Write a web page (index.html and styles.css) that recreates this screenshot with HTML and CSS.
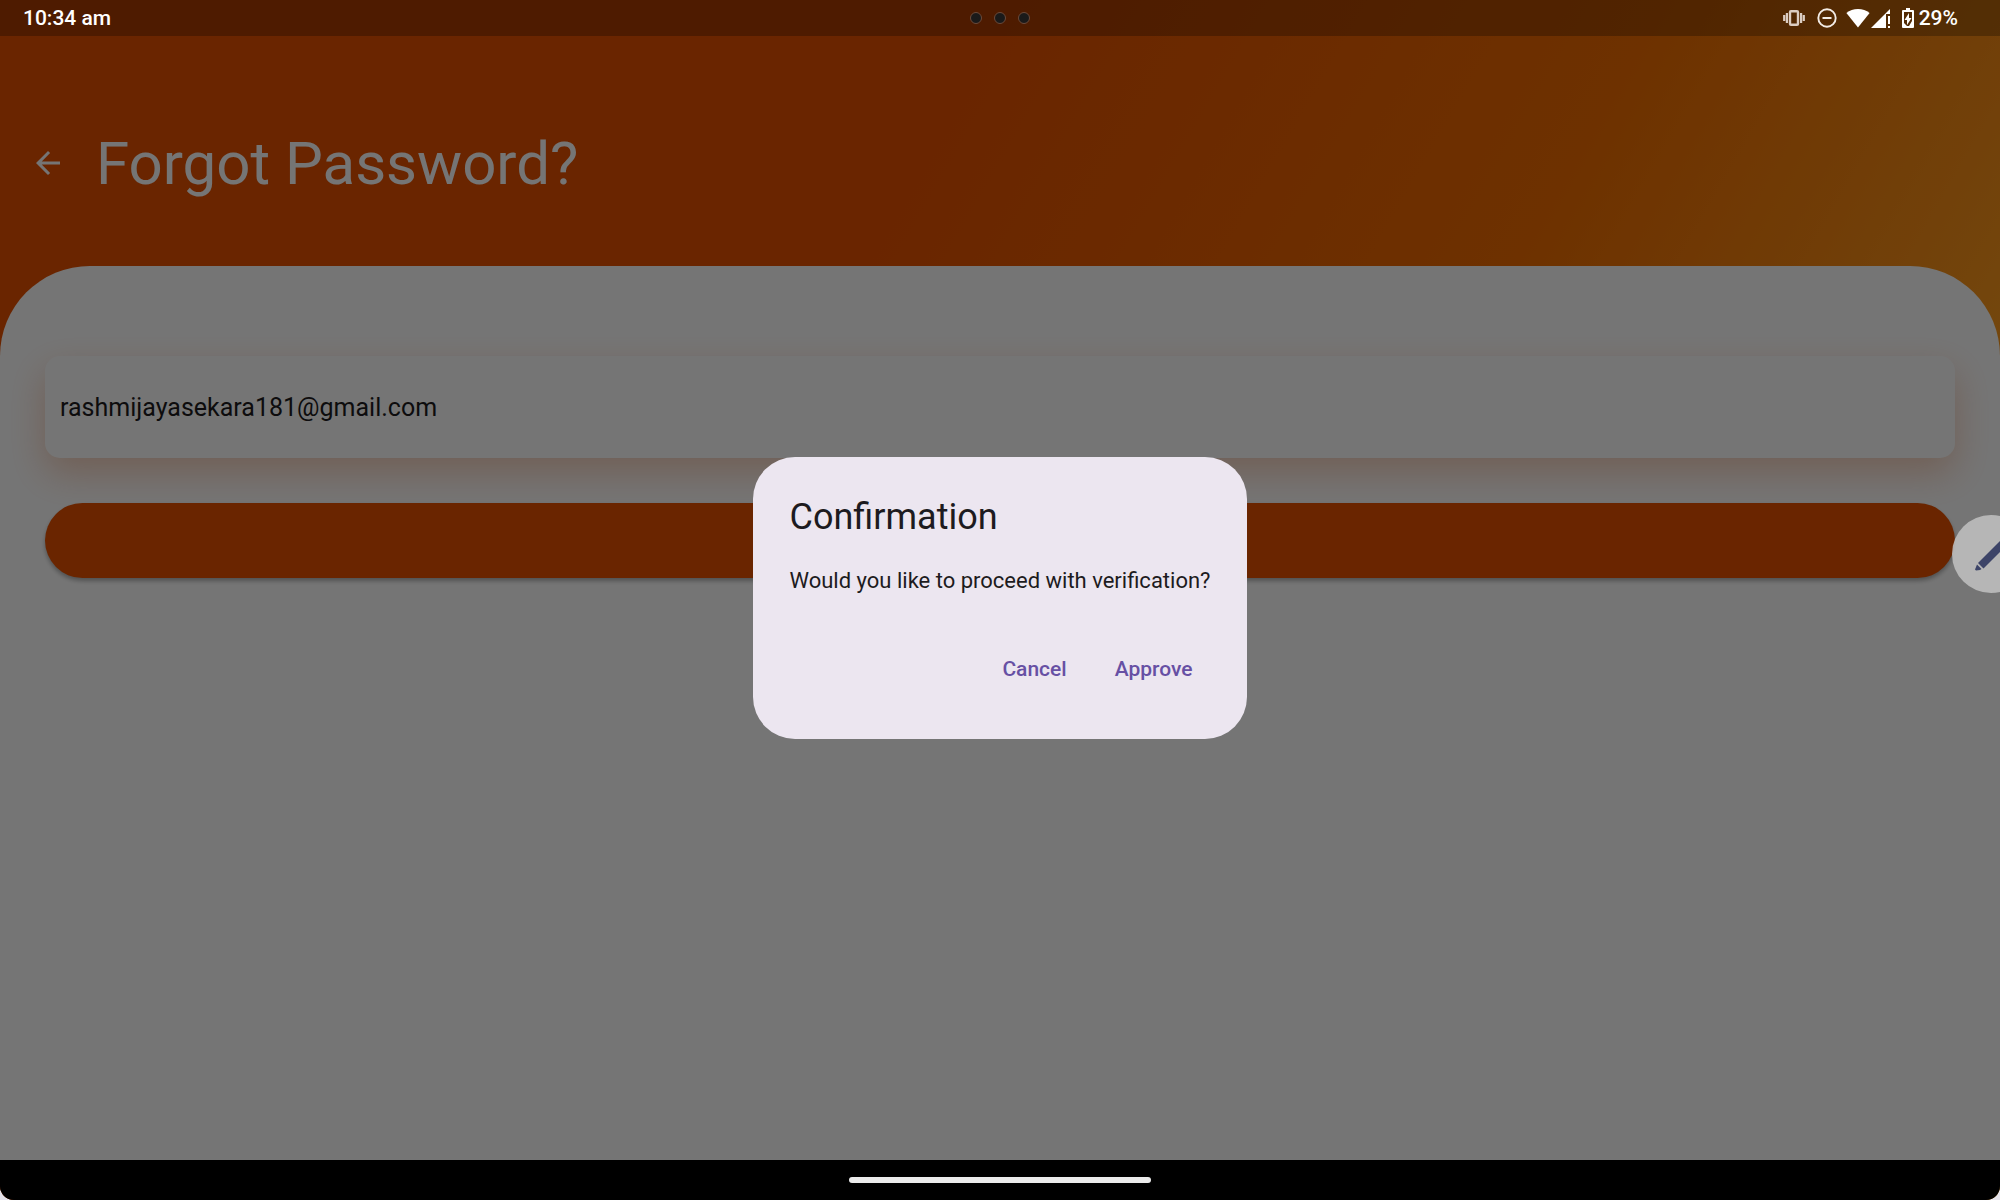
FILE: index.html
```html
<!DOCTYPE html>
<html lang="en">
<head>
<meta charset="utf-8">
<meta name="viewport" content="width=device-width, initial-scale=1">
<title>Forgot Password?</title>
<link rel="stylesheet" href="styles.css">
</head>
<body>
<div class="device">
  <div class="status-bar">
    <time class="clock">10:34 am</time>
    <div class="camera-dots"><i></i><i></i><i></i></div>
    <div class="indicators">
      <svg class="icon-vibrate" width="22" height="16" viewBox="0 0 22 16" aria-hidden="true">
        <rect x="7" y="1.200" width="8" height="13.600" rx="1" fill="none" stroke="currentColor" stroke-width="2.400"/>
        <path d="M3.900 3v10M18.100 3v10M1.200 5v6M20.800 5v6" fill="none" stroke="currentColor" stroke-width="2.200"/>
      </svg>
      <svg class="icon-dnd" width="20" height="20" viewBox="0 0 20 20" aria-hidden="true">
        <circle cx="10" cy="10" r="8.700" fill="none" stroke="currentColor" stroke-width="1.900"/>
        <path d="M5.500 10h9" stroke="currentColor" stroke-width="2"/>
      </svg>
      <div class="network">
        <svg width="24" height="20" viewBox="0 0 24 20" aria-hidden="true">
          <path d="M12 19.500.400 5C3.600 2.400 7.600 1 12 1s8.400 1.400 11.600 4z" fill="currentColor"/>
        </svg>
        <svg width="20" height="20" viewBox="0 0 20 20" aria-hidden="true">
          <path d="M0 20 19 1v5h-4v14zM17 8h2v8h-2zM17 18h2v2h-2z" fill="currentColor"/>
        </svg>
      </div>
      <div class="battery">
        <svg width="12" height="20" viewBox="0 0 12 20" aria-hidden="true">
          <path d="M4 0h4v2h3a1 1 0 0 1 1 1v16a1 1 0 0 1-1 1H1a1 1 0 0 1-1-1V3a1 1 0 0 1 1-1h3z" fill="currentColor"/>
          <path d="M2 4h8v9l-3 5H5l-3-3z" fill="#532b05"/>
          <path d="M7 5 2.500 12H5v5l4.500-7H7z" fill="currentColor"/>
        </svg>
        <span>29%</span>
      </div>
    </div>
  </div>

  <main class="page">
    <header class="page-header">
      <button class="back" type="button" aria-label="Back">
        <svg width="36" height="36" viewBox="0 0 24 24" aria-hidden="true"><path d="M20 11H7.830l5.590-5.590L12 4l-8 8 8 8 1.410-1.410L7.830 13H20v-2z" fill="currentColor"/></svg>
      </button>
      <h1>Forgot Password?</h1>
    </header>
    <form class="sheet">
      <input class="email" type="email" value="rashmijayasekara181@gmail.com" aria-label="Email">
      <button class="submit" type="button" aria-label="Continue"></button>
    </form>
  </main>

  <div class="scrim">
    <dialog class="dialog" open aria-labelledby="dialog-title">
      <h2 id="dialog-title">Confirmation</h2>
      <p>Would you like to proceed with verification?</p>
      <div class="actions">
        <button type="button">Cancel</button>
        <button type="button">Approve</button>
      </div>
    </dialog>
  </div>

  <button class="pen" type="button" aria-label="Pen">
    <svg width="78" height="78" viewBox="0 0 78 78" aria-hidden="true">
      <path d="M26 48 51 23l5.500 5.500L31.500 53.500zM25 49.500l4.500 4.500-1.500 1-4 .500-1-1z" fill="#3d4468"/>
    </svg>
  </button>

  <nav class="gesture-bar"><span class="handle"></span></nav>
</div>
</body>
</html>
```
FILE: styles.css
```css
* {
  box-sizing: border-box;
}

html {
  background: #e4e2ea;
}

body {
  margin: 0;
  font-family: Roboto, sans-serif;
}

button {
  padding: 0;
  border: 0;
  background: none;
  color: inherit;
  font: inherit;
}

svg {
  display: block;
}

.device {
  position: relative;
  display: flex;
  flex-direction: column;
  min-height: 100vh;
  overflow: hidden;
  border-radius: 0 0 14px 14px;
  background: linear-gradient(120deg, #e65100 37%, #ef6c00 62%, #ffa726 87%);
}

/* System status bar, drawn above the modal scrim */
.status-bar {
  position: relative;
  z-index: 2;
  display: grid;
  grid-template-columns: 1fr auto 1fr;
  align-items: center;
  height: 36px;
  padding: 0 42px 0 23px;
  background: rgba(0, 0, 0, 0.26);
  color: #fff;
  font-size: 21px;
  font-weight: 500;
}

.camera-dots {
  display: flex;
  gap: 12px;
  padding-left: 19px;
}

.camera-dots i {
  width: 12px;
  height: 12px;
  border: 1px solid #6b4a3a;
  border-radius: 50%;
  background: #1a1a1a;
}

.indicators {
  display: flex;
  justify-content: flex-end;
  align-items: center;
  gap: 12px;
}

.icon-vibrate {
  color: #dccdc2;
}

.icon-dnd {
  color: #f3ece6;
}

.network {
  display: flex;
  gap: 1px;
  margin-left: -3px;
}

.battery {
  display: flex;
  align-items: center;
  gap: 5px;
  margin-left: -1px;
}

.page {
  display: flex;
  flex: 1;
  flex-direction: column;
}

.page-header {
  display: flex;
  align-items: center;
  gap: 30px;
  height: 230px;
  padding: 24px 30px 0;
  color: #fff;
}

.page-header h1 {
  margin: 0;
  font-size: 60px;
  font-weight: 400;
}

.sheet {
  display: flex;
  flex: 1;
  flex-direction: column;
  gap: 45px;
  padding: 90px 45px;
  border-radius: 90px 90px 0 0;
  background: #fff;
}

.email {
  width: 100%;
  height: 102px;
  padding: 0 15px;
  border: 0;
  border-radius: 15px;
  background: #fff;
  box-shadow: 0 15px 36px rgba(225, 95, 27, 0.3);
  color: #1d1b20;
  font: inherit;
  font-size: 25px;
}

.submit {
  height: 75px;
  border-radius: 38px;
  background: #e65100;
  box-shadow: 0 3px 4px rgba(0, 0, 0, 0.3);
}

.scrim {
  position: absolute;
  inset: 0;
  z-index: 1;
  display: grid;
  place-items: center;
  padding: 36px 0 40px;
  background: rgba(0, 0, 0, 0.54);
}

.dialog {
  position: static;
  margin: 0;
  padding: 36px 36px 34px;
  border: 0;
  border-radius: 42px;
  background: #ece6f0;
  color: #1d1b20;
}

.dialog h2 {
  margin: 0 0 24px;
  font-size: 36px;
  font-weight: 400;
  line-height: 48px;
}

.dialog p {
  margin: 0 0 36px;
  font-size: 22px;
  line-height: 32px;
}

.actions {
  display: flex;
  justify-content: flex-end;
  gap: 12px;
}

.actions button {
  height: 72px;
  padding: 0 18px;
  color: #6750a4;
  font-size: 21px;
  font-weight: 500;
}

/* Floating stylus shortcut, half tucked behind the screen edge */
.pen {
  position: absolute;
  top: 515px;
  right: -30px;
  z-index: 2;
  border-radius: 50%;
  background: rgba(190, 190, 190, 0.9);
}

.gesture-bar {
  position: relative;
  z-index: 2;
  display: flex;
  justify-content: center;
  align-items: center;
  height: 40px;
  background: #000;
}

.handle {
  width: 302px;
  height: 6px;
  border-radius: 3px;
  background: #ebebeb;
}
```
